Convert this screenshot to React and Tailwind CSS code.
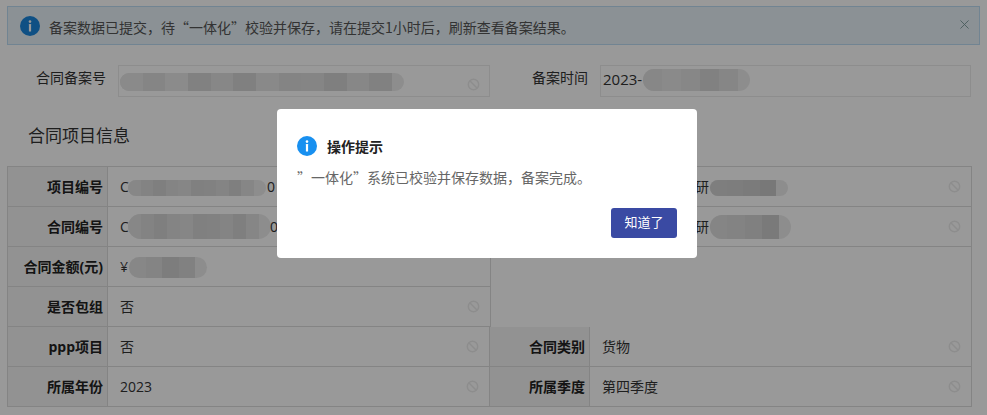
const FONT = 'font-["Microsoft_YaHei","Open_Sans","Noto_Sans_CJK_SC",sans-serif]';
const CJK = 'font-["Noto_Sans_CJK_SC",sans-serif]';

function Ban({ className = "" }) {
  return (
    <svg viewBox="0 0 14 14" className={"h-[13px] w-[13px] " + className} fill="none" stroke="#ececec" strokeWidth="1.6">
      <circle cx="7" cy="7" r="5.6" />
      <path d="M3 3l8 8" />
    </svg>
  );
}

function Info({ color, size }) {
  return (
    <svg viewBox="0 0 20 20" style={{ width: size, height: size }} className="shrink-0">
      <circle cx="10" cy="10" r="10" fill={color} />
      <circle cx="10" cy="5.6" r="1.3" fill="#fff" />
      <rect x="8.9" y="8" width="2.2" height="7.6" rx="0.4" fill="#fff" />
    </svg>
  );
}

function Smudge({ className, cells }) {
  return (
    <span className={"absolute flex overflow-hidden rounded-full bg-[#ececec] pr-[12px] " + className}>
      {cells.map((c, i) => (
        <span key={i} className="h-full flex-1" style={{ background: c }} />
      ))}
    </span>
  );
}

const g1 = ["#e6e6e6", "#dedede", "#e8e8e8", "#d8d8d8", "#e2e2e2", "#d6d6d6", "#e4e4e4", "#dcdcdc", "#dedede", "#d4d4d4", "#e2e2e2", "#d8d8d8"];
const g2 = ["#e2e2e2", "#dadada", "#d4d4d4", "#dcdcdc", "#e0e0e0", "#d6d6d6", "#d8d8d8", "#dcdcdc", "#d4d4d4", "#e0e0e0"];
const g3 = ["#d2d2d2", "#d0d0d0", "#cdcdcd", "#c9c9c9"];

function Row({ label, value, smudge, ban = true }) {
  return (
    <div className="flex h-10 border-b border-[#dcdcdc]">
      <div className="flex w-[100px] shrink-0 items-center justify-end border-r border-[#dcdcdc] bg-[#f4f4f4] pr-1 text-sm font-bold text-[#222]">
        {label}
      </div>
      <div className="relative flex min-w-0 flex-1 items-center pl-3 text-sm text-[#333]">
        {value}
        {smudge}
        {ban && <Ban className="absolute right-[10px] top-[13px]" />}
      </div>
    </div>
  );
}

export default function App() {
  return (
    <div className={"relative h-[415px] w-[987px] overflow-hidden bg-white " + FONT}>
      <div className="px-[7px] pt-[6px]">
        <div className="flex h-[39px] items-center justify-between border border-[#bcdcf4] bg-[#e8f2f8] pl-3 pr-[10px]">
          <div className="flex items-center gap-[9px] text-sm text-[#555]">
            <Info color="#1a86dc" size={20} />
            <span className={"pt-[2px] " + CJK}>备案数据已提交，待“一体化”校验并保存，请在提交1小时后，刷新查看备案结果。</span>
          </div>
          <svg viewBox="0 0 10 10" className="mb-[2px] h-[9px] w-[9px]" stroke="#7a9a9a" strokeWidth="1">
            <path d="M0.5 0.5l9 9M9.5 0.5l-9 9" />
          </svg>
        </div>

        <div className="mt-[20px] flex h-[32px] pr-[9px]">
          <div className="flex w-[483px] items-center">
            <span className="w-[99px] pb-[7px] text-right text-sm text-[#333]">合同备案号</span>
            <div className="relative ml-[12px] h-full flex-1 border border-[#ececec]">
              <Smudge className="left-[1px] top-[7px] h-[18px] w-[284px]" cells={g1} />
              <Ban className="absolute right-[9px] top-[12px]" />
            </div>
          </div>
          <div className="flex flex-1 items-center">
            <span className="ml-[42px] w-[56px] whitespace-nowrap pb-[7px] text-sm text-[#333]">备案时间</span>
            <div className="relative ml-[12px] flex h-full flex-1 items-center border border-[#ececec] pb-[3px] pl-[2px] text-[15px] text-[#333]">
              2023-
              <Smudge className="left-[42px] top-[3px] h-[22px] w-[107px]" cells={["#e2e2e2", "#e6e6e6", "#e2e2e2", "#d8d8d8", "#e0e0e0"]} />
            </div>
          </div>
        </div>

        <h2 className="mb-[18px] ml-[21px] mt-[27px] h-[24px] text-[17px] leading-6 text-[#333]">合同项目信息</h2>

        <div className="w-[965px] border-l border-r border-t border-[#dcdcdc]">
          <div className="grid grid-cols-[483px_1fr]">
            <div className="border-r border-[#dcdcdc]">
              <Row label="项目编号" value={<span>C</span>} ban={false} smudge={<><Smudge className="left-[20px] top-[13px] h-[16px] w-[138px]" cells={g2} /><span className="absolute left-[159px]">0</span></>} />
              <Row label="合同编号" value={<span>C</span>} ban={false} smudge={<><Smudge className="left-[20px] top-[7px] h-[25px] w-[143px]" cells={g2} /><span className="absolute left-[162px]">0</span></>} />
              <Row label="合同金额(元)" value={<span>¥</span>} ban={false} smudge={<Smudge className="left-[21px] top-[10px] h-[21px] w-[78px]" cells={["#e2e2e2", "#dcdcdc", "#d0d0d0", "#d8d8d8"]} />} />
              <Row label="是否包组" value="否" />
            </div>
            <div>
              <Row label="" value={<span className="ml-[92px]">研</span>} smudge={<Smudge className="left-[119px] top-[13px] h-[16px] w-[78px]" cells={g3} />} />
              <Row label="" value={<span className="ml-[92px]">研</span>} smudge={<Smudge className="left-[119px] top-[8px] h-[24px] w-[81px]" cells={["#dedede", "#dadada", "#d6d6d6", "#cccccc"]} />} />
            </div>
          </div>
          <div className="grid grid-cols-[482px_1fr]">
            <div className="border-r border-[#dcdcdc]">
              <Row label="ppp项目" value="否" />
              <Row label="所属年份" value="2023" />
            </div>
            <div>
              <Row label="合同类别" value="货物" />
              <Row label="所属季度" value="第四季度" />
            </div>
          </div>
        </div>
      </div>

      <div className="absolute inset-0 bg-black/40" />

      <div className="absolute left-[277px] top-[109px] flex h-[149px] w-[420px] flex-col rounded-[4px] bg-white px-5 pt-[26px]">
        <div className="flex items-center gap-[10px]">
          <Info color="#1890f0" size={20} />
          <span className={"pt-[1px] text-sm font-bold text-[#222] " + CJK}>操作提示</span>
        </div>
        <p className={"mt-[11px] text-sm text-[#666] " + CJK}>”一体化”系统已校验并保存数据，备案完成。</p>
        <div className="mt-auto mb-5 flex justify-end">
          <button className="h-[30px] w-[66px] rounded-[3px] bg-[#3a4aa3] text-[13px] text-white">知道了</button>
        </div>
      </div>
    </div>
  );
}
